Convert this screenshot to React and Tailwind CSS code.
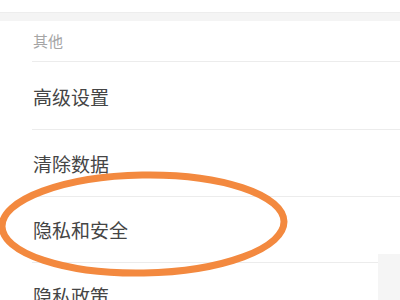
export default function App() {
  const font = { fontFamily: '"Noto Sans CJK SC", "Noto Sans", sans-serif' };
  return (
    <div className="relative w-[400px] h-[300px] overflow-hidden bg-white" style={font}>
      <div className="h-[12px] bg-white" />
      <div className="h-[9px] bg-[#f4f4f4] border-t border-[#ededed]" />
      <div className="pl-[32px]">
        <div className="h-[41px] flex items-center pl-[1px] text-[15px] text-[#a5a5a5] border-b border-[#ececec]">
          其他
        </div>
        <div className="h-[68px] flex items-center pl-[1px] pt-[4px] text-[19px] text-[#454545] border-b border-[#ececec]">
          高级设置
        </div>
        <div className="h-[67px] flex items-center pl-[1px] pt-[2px] text-[19px] text-[#454545] border-b border-[#ececec]">
          清除数据
        </div>
        <div className="h-[66px] mr-[22px] flex items-center pl-[1px] pt-[2px] text-[19px] text-[#454545] border-b border-[#ececec]">
          隐私和安全
        </div>
        <div className="h-[67px] flex items-center pl-[1px] text-[19px] text-[#454545]">
          隐私政策
        </div>
      </div>
      <div className="absolute left-[378px] top-[254px] w-[22px] h-[46px] bg-[#f5f5f5]" />
      <svg className="absolute left-0 top-0" width="400" height="300" viewBox="0 0 400 300">
        <ellipse cx="143" cy="224" rx="141" ry="49" fill="none" stroke="#f3893f" strokeWidth="7" transform="rotate(-1 143 224)" />
      </svg>
    </div>
  );
}
